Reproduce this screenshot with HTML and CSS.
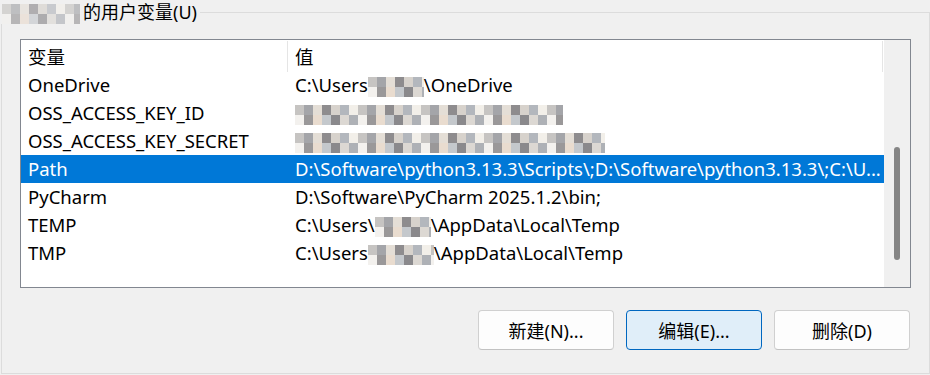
FILE: index.html
```html
<!doctype html>
<html lang="zh-CN">
    <head>
        <meta charset="UTF-8" />
        <meta name="viewport" content="width=device-width, initial-scale=1.0" />
        <title>环境变量</title>
        <link rel="stylesheet" href="styles.css">
    </head>
    <body>
        <fieldset class="group">
            <legend class="group-title"><span class="mosaic mosaic-title"></span>的用户变量(U)</legend>

            <div class="listview">
                <div class="lv-body">
                    <div class="lv-header">
                        <div class="lv-head">变量</div>
                        <div class="lv-head">值</div>
                        <div class="lv-head-rest"></div>
                    </div>
                    <div class="lv-row">
                        <div class="lv-name">OneDrive</div>
                        <div class="lv-value">C:\Users<span class="mosaic mosaic-user"></span>\OneDrive</div>
                    </div>
                    <div class="lv-row">
                        <div class="lv-name">OSS_ACCESS_KEY_ID</div>
                        <div class="lv-value"><span class="mosaic mosaic-id"></span></div>
                    </div>
                    <div class="lv-row">
                        <div class="lv-name">OSS_ACCESS_KEY_SECRET</div>
                        <div class="lv-value"><span class="mosaic mosaic-secret"></span></div>
                    </div>
                    <div class="lv-row selected">
                        <div class="lv-name">Path</div>
                        <div class="lv-value">D:\Software\python3.13.3\Scripts\;D:\Software\python3.13.3\;C:\U...</div>
                    </div>
                    <div class="lv-row">
                        <div class="lv-name">PyCharm</div>
                        <div class="lv-value">D:\Software\PyCharm 2025.1.2\bin;</div>
                    </div>
                    <div class="lv-row">
                        <div class="lv-name">TEMP</div>
                        <div class="lv-value">C:\Users\<span class="mosaic mosaic-user"></span>\AppData\Local\Temp</div>
                    </div>
                    <div class="lv-row">
                        <div class="lv-name">TMP</div>
                        <div class="lv-value">C:\Users<span class="mosaic mosaic-user wide"></span>\AppData\Local\Temp</div>
                    </div>
                </div>
                <div class="scrollbar">
                    <div class="thumb"></div>
                </div>
            </div>

            <div class="buttons">
                <button class="btn">新建(N)...</button>
                <button class="btn focused">编辑(E)...</button>
                <button class="btn">删除(D)</button>
            </div>
        </fieldset>
    </body>
</html>
```

FILE: styles.css
```css
:root {
    --face: #f0f0f0;
    --frame: #dcdcdc;
    --list-border: #828790;
    --select: #0078d7;
    --thumb: #858585;
}

body {
    font-family: "Noto Sans", "Noto Sans CJK SC", sans-serif;
    font-size: 18px;
    margin: 0;
    padding: 0;
    background-color: var(--face);
    color: #000;
    overflow: hidden;
}

.group {
    box-sizing: border-box;
    width: 929px;
    margin: 0 0 0 1px;
    padding: 0 18px 23px 18px;
    border: 1px solid var(--frame);
    min-width: 0;
}

.group-title {
    margin-left: -20px;
    padding: 0 3px 0 0;
    line-height: 24px;
    white-space: nowrap;
}

.mosaic {
    display: inline-block;
    vertical-align: middle;
    height: 20px;
    background-image:
        repeating-linear-gradient(90deg, #c6c4c2 0 9px, #a4a5a9 9px 18px, #e4ded6 18px 27px, #8e8c8e 27px 36px, #d7d2cc 36px 45px, #b3b7bd 45px 54px, #f2efe9 54px 63px),
        repeating-linear-gradient(90deg, #f3f1ee 0 9px, #9a9899 9px 18px, #e9dccf 18px 27px, #c4c8cc 27px 36px, #8a898c 36px 45px, #dcd8d3 45px 54px, #aeb1b6 54px 63px);
    background-size: 100% 50%;
    background-position: 0 0, 0 100%;
    background-repeat: no-repeat;
}

.mosaic-title {
    width: 78px;
    margin: 0 3px 0 2px;
    opacity: 0.65;
}

.mosaic-user {
    width: 56px;
}

.mosaic-user.wide {
    width: 66px;
}

.mosaic-id {
    width: 268px;
}

.mosaic-secret {
    width: 310px;
}

.listview {
    display: flex;
    box-sizing: border-box;
    height: 249px;
    margin-top: 15px;
    border: 1px solid var(--list-border);
    background: #fff;
    font-size: 18.5px;
}

.lv-body {
    flex: 1;
    min-width: 0;
}

.lv-header {
    display: grid;
    grid-template-columns: 267px 595px 1fr;
    height: 31px;
}

.lv-head {
    box-sizing: border-box;
    padding: 1px 0 0 7px;
    line-height: 30px;
    border-right: 1px solid #e5e5e5;
    margin-top: 1px;
}

.lv-row {
    display: grid;
    grid-template-columns: 267px 1fr;
    height: 28px;
    line-height: 28px;
    white-space: nowrap;
}

.lv-name {
    padding-left: 7px;
    overflow: hidden;
}

.lv-value {
    padding-left: 7px;
    overflow: hidden;
}

.lv-row.selected {
    background-color: var(--select);
    color: #fff;
}

.scrollbar {
    width: 26px;
    background-color: var(--face);
    padding-top: 107px;
    box-sizing: border-box;
}

.thumb {
    width: 6px;
    height: 113px;
    margin-left: 10px;
    border-radius: 3px;
    background-color: var(--thumb);
}

.buttons {
    display: flex;
    justify-content: flex-end;
    gap: 12px;
    margin-top: 22px;
    padding-right: 1px;
}

.btn {
    box-sizing: border-box;
    width: 136px;
    height: 40px;
    font: inherit;
    color: #000;
    background: #fdfdfd;
    border: 1px solid #d0d0d0;
    border-bottom-color: #c2c2c2;
    border-radius: 4px;
    padding: 0;
}

.btn.focused {
    background: #e0eef9;
    border-color: #0067c0;
}
```
